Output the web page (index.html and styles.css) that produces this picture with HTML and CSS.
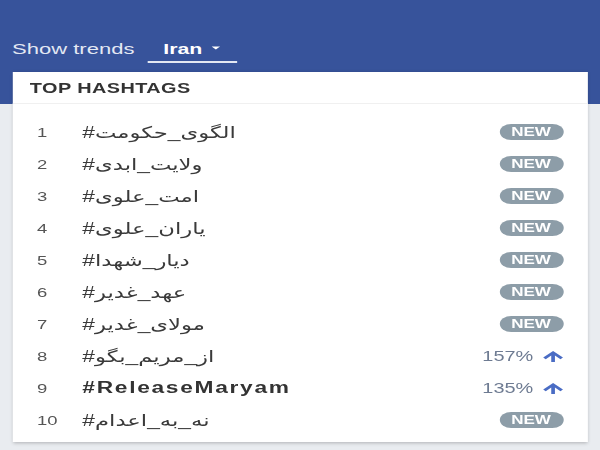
FILE: index.html
```html
<!DOCTYPE html>
<html>
<head>
    <title>Trends</title>
    <meta charset="UTF-8">
    <link rel="stylesheet" href="styles.css">
</head>
<body>
    <div class="page">
        <header class="topbar">
            <div class="filter">
                <span class="filter-label">Show trends</span>
                <button class="select">
                    <span>Iran</span>
                    <svg class="caret" viewBox="0 0 10 5" width="6" height="4"><path d="M0 0h10L5 5z" fill="#fff"/></svg>
                </button>
            </div>
        </header>
        <section class="card">
            <h2 class="card-title">TOP HASHTAGS</h2>
            <ol class="trend-list">
                <li class="trend"><span class="rank">1</span><span class="tag">#الگوی_حکومت</span><span class="badge">NEW</span></li>
                <li class="trend"><span class="rank">2</span><span class="tag">#ولایت_ابدی</span><span class="badge">NEW</span></li>
                <li class="trend"><span class="rank">3</span><span class="tag">#امت_علوی</span><span class="badge">NEW</span></li>
                <li class="trend"><span class="rank">4</span><span class="tag">#یاران_علوی</span><span class="badge">NEW</span></li>
                <li class="trend"><span class="rank">5</span><span class="tag">#دیار_شهدا</span><span class="badge">NEW</span></li>
                <li class="trend"><span class="rank">6</span><span class="tag">#عهد_غدیر</span><span class="badge">NEW</span></li>
                <li class="trend"><span class="rank">7</span><span class="tag">#مولای_غدیر</span><span class="badge">NEW</span></li>
                <li class="trend"><span class="rank">8</span><span class="tag">#از_مریم_بگو</span>
                    <span class="growth">157%
                        <svg class="arrow" viewBox="0 0 16 14" width="15" height="13"><path d="M8 1L15.5 8.2 13.6 10 9.4 6V13H6.6V6L2.4 10 .5 8.2z" fill="#4a6cc4"/></svg>
                    </span>
                </li>
                <li class="trend"><span class="rank">9</span><span class="tag tag-latin">#ReleaseMaryam</span>
                    <span class="growth">135%
                        <svg class="arrow" viewBox="0 0 16 14" width="15" height="13"><path d="M8 1L15.5 8.2 13.6 10 9.4 6V13H6.6V6L2.4 10 .5 8.2z" fill="#4a6cc4"/></svg>
                    </span>
                </li>
                <li class="trend"><span class="rank">10</span><span class="tag">#نه_به_اعدام</span><span class="badge">NEW</span></li>
            </ol>
        </section>
    </div>
</body>
</html>
```

FILE: styles.css
```css
html, body {
    margin: 0;
    padding: 0;
    height: 100%;
    overflow: hidden;
}
body {
    background-color: #e9ecf0;
    font-family: "Liberation Sans", "DejaVu Sans", sans-serif;
}
/* the shot is stretched sideways, so the page is drawn narrow and widened */
.page {
    width: 422.5px;
    transform: scaleX(1.42);
    transform-origin: 0 0;
}
.topbar {
    height: 104px;
    padding: 35px 0 0 8.5px;
    box-sizing: border-box;
    background-color: #37539b;
}
.filter {
    display: flex;
    align-items: center;
}
.filter-label {
    color: #e3e8f3;
    font-size: 15.5px;
    margin-right: 9px;
}
.select {
    display: flex;
    align-items: center;
    gap: 7px;
    height: 28px;
    padding: 0 12px 0 11.3px;
    background: none;
    border: none;
    border-bottom: 2px solid #e3e8f3;
    color: #fff;
    font-family: inherit;
    font-size: 15px;
    font-weight: bold;
}
.card {
    margin: -32px 9px 0 8.5px;
    background-color: #fff;
    box-shadow: 0 1px 3px rgba(0,0,0,0.25);
}
.card-title {
    margin: 0;
    height: 31px;
    line-height: 32px;
    padding-left: 12.5px;
    border-bottom: 1px solid #f0f0f0;
    color: #333;
    font-size: 14px;
    font-weight: bold;
    letter-spacing: 0.3px;
}
.trend-list {
    list-style: none;
    margin: 0;
    padding: 12px 0 6px;
}
.trend {
    display: flex;
    align-items: center;
    height: 32px;
    padding: 0 17px 0 17.5px;
}
.rank {
    width: 32px;
    color: #555;
    font-size: 13px;
}
.tag {
    flex: 1;
    color: #3a3a3a;
    font-size: 16px;
}
.tag-latin {
    font-weight: bold;
    font-size: 16px;
    letter-spacing: 1.2px;
    color: #333;
}
.badge {
    width: 45px;
    height: 16px;
    line-height: 16px;
    border-radius: 8px;
    background-color: #8d9da8;
    color: #fff;
    font-size: 12px;
    font-weight: bold;
    text-align: center;
}
.growth {
    display: flex;
    align-items: center;
    gap: 6px;
    color: #6e7b92;
    font-size: 14px;
}
```
